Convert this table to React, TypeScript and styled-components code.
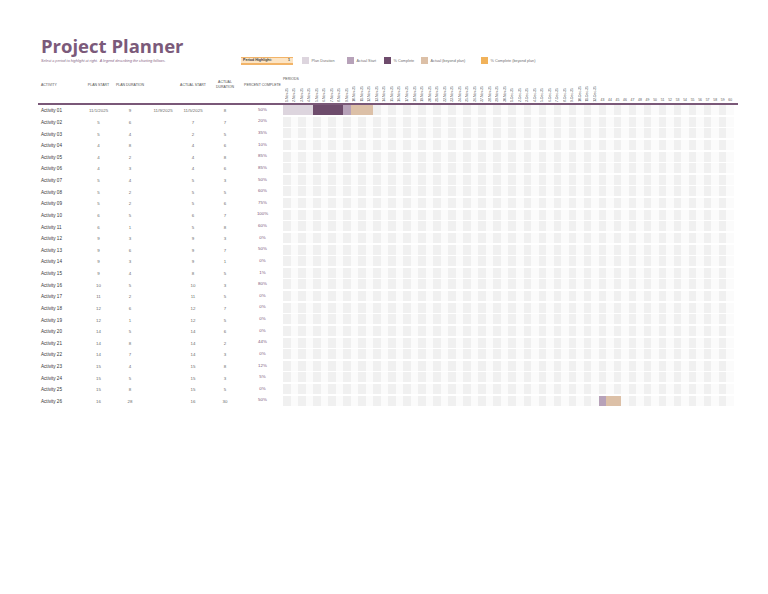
import React, { FC } from 'react';
import styled, { createGlobalStyle, css } from 'styled-components';

type CellKind = 'plan' | 'start' | 'done' | 'beyond' | 'none';

type Activity = {
  name: string,
  planStart: string,
  planDuration: string,
  extra?: string,
  actualStart: string,
  actualDuration: string,
  percent: string,
  bars?: [number, number, CellKind][],
};

const PERIODS = 60;
const DATE_COLUMNS = 42;

const activities: Activity[] = [
  { name: 'Activity 01', planStart: '11/1/2025', planDuration: '9', extra: '11/9/2025', actualStart: '11/5/2025', actualDuration: '8', percent: '50%',
    bars: [[0, 3, 'plan'], [4, 7, 'done'], [8, 8, 'start'], [9, 11, 'beyond']] },
  { name: 'Activity 02', planStart: '5', planDuration: '6', actualStart: '7', actualDuration: '7', percent: '20%' },
  { name: 'Activity 03', planStart: '5', planDuration: '4', actualStart: '2', actualDuration: '5', percent: '35%' },
  { name: 'Activity 04', planStart: '4', planDuration: '8', actualStart: '4', actualDuration: '6', percent: '10%' },
  { name: 'Activity 05', planStart: '4', planDuration: '2', actualStart: '4', actualDuration: '8', percent: '85%' },
  { name: 'Activity 06', planStart: '4', planDuration: '3', actualStart: '4', actualDuration: '6', percent: '85%' },
  { name: 'Activity 07', planStart: '5', planDuration: '4', actualStart: '5', actualDuration: '3', percent: '50%' },
  { name: 'Activity 08', planStart: '5', planDuration: '2', actualStart: '5', actualDuration: '5', percent: '60%' },
  { name: 'Activity 09', planStart: '5', planDuration: '2', actualStart: '5', actualDuration: '6', percent: '75%' },
  { name: 'Activity 10', planStart: '6', planDuration: '5', actualStart: '6', actualDuration: '7', percent: '100%' },
  { name: 'Activity 11', planStart: '6', planDuration: '1', actualStart: '5', actualDuration: '8', percent: '60%' },
  { name: 'Activity 12', planStart: '9', planDuration: '3', actualStart: '9', actualDuration: '3', percent: '0%' },
  { name: 'Activity 13', planStart: '9', planDuration: '6', actualStart: '9', actualDuration: '7', percent: '50%' },
  { name: 'Activity 14', planStart: '9', planDuration: '3', actualStart: '9', actualDuration: '1', percent: '0%' },
  { name: 'Activity 15', planStart: '9', planDuration: '4', actualStart: '8', actualDuration: '5', percent: '1%' },
  { name: 'Activity 16', planStart: '10', planDuration: '5', actualStart: '10', actualDuration: '3', percent: '80%' },
  { name: 'Activity 17', planStart: '11', planDuration: '2', actualStart: '11', actualDuration: '5', percent: '0%' },
  { name: 'Activity 18', planStart: '12', planDuration: '6', actualStart: '12', actualDuration: '7', percent: '0%' },
  { name: 'Activity 19', planStart: '12', planDuration: '1', actualStart: '12', actualDuration: '5', percent: '0%' },
  { name: 'Activity 20', planStart: '14', planDuration: '5', actualStart: '14', actualDuration: '6', percent: '0%' },
  { name: 'Activity 21', planStart: '14', planDuration: '8', actualStart: '14', actualDuration: '2', percent: '44%' },
  { name: 'Activity 22', planStart: '14', planDuration: '7', actualStart: '14', actualDuration: '3', percent: '0%' },
  { name: 'Activity 23', planStart: '15', planDuration: '4', actualStart: '15', actualDuration: '8', percent: '12%' },
  { name: 'Activity 24', planStart: '15', planDuration: '5', actualStart: '15', actualDuration: '3', percent: '5%' },
  { name: 'Activity 25', planStart: '15', planDuration: '8', actualStart: '15', actualDuration: '5', percent: '0%' },
  { name: 'Activity 26', planStart: '16', planDuration: '28', actualStart: '16', actualDuration: '30', percent: '50%',
    bars: [[42, 42, 'start'], [43, 44, 'beyond']] },
];

const legend: { label: string, color: string, width: number }[] = [
  { label: 'Plan Duration', color: '#ddd5de', width: 45 },
  { label: 'Actual Start', color: '#b7a2b9', width: 37 },
  { label: '% Complete', color: '#6e4c6c', width: 37 },
  { label: 'Actual (beyond plan)', color: '#dcc0a7', width: 60 },
  { label: '% Complete (beyond plan)', color: '#f1b25a', width: 70 },
];

const cellColors: Record<CellKind, string> = {
  plan: '#ddd5de',
  start: '#b7a2b9',
  done: '#6e4c6c',
  beyond: '#dcc0a7',
  none: 'transparent',
};

const periodLabel = (i: number) => {
  if (i >= DATE_COLUMNS) return String(i + 1);
  if (i < 30) return `${i + 1}-Nov-25`;
  return `${i - 29}-Dec-25`;
};

const kindAt = (bars: Activity['bars'], col: number): CellKind => {
  const hit = bars?.find(([from, to]) => col >= from && col <= to);
  return hit ? hit[2] : 'none';
};

export default function App() {
  return (
    <>
      <GlobalStyle />
      <Page>
        <Title>Project Planner</Title>
        <TopBar>
          <Subtitle>Select a period to highlight at right.  A legend describing the charting follows.</Subtitle>
          <HighlightBox>
            <span>Period Highlight:</span>
            <span>1</span>
          </HighlightBox>
          <Legend>
            {legend.map(item => (
              <LegendItem key={item.label} $width={item.width}>
                <Swatch $color={item.color} />
                {item.label}
              </LegendItem>
            ))}
          </Legend>
        </TopBar>

        <HeaderRow>
          <HeadCell $align="left">ACTIVITY</HeadCell>
          <HeadCell>PLAN START</HeadCell>
          <HeadCell>PLAN DURATION</HeadCell>
          <HeadCell />
          <HeadCell>ACTUAL START</HeadCell>
          <HeadCell $twoLine>ACTUAL<br />DURATION</HeadCell>
          <HeadCell>PERCENT COMPLETE</HeadCell>
          <PeriodHead>
            <PeriodTitle>PERIODS</PeriodTitle>
            <PeriodLabels>
              {Array.from({ length: PERIODS }, (_, i) => (
                <PeriodLabel key={i} $vertical={i < DATE_COLUMNS}>
                  <span>{periodLabel(i)}</span>
                </PeriodLabel>
              ))}
            </PeriodLabels>
          </PeriodHead>
        </HeaderRow>

        {activities.map(a => (
          <TaskRow key={a.name}>
            <NameCell>{a.name}</NameCell>
            <ValueCell>{a.planStart}</ValueCell>
            <ValueCell>{a.planDuration}</ValueCell>
            <ValueCell>{a.extra}</ValueCell>
            <ValueCell>{a.actualStart}</ValueCell>
            <ValueCell>{a.actualDuration}</ValueCell>
            <PercentCell>{a.percent}</PercentCell>
            {Array.from({ length: PERIODS }, (_, i) => (
              <GanttCell key={i} $kind={kindAt(a.bars, i)} $alt={i % 2 === 1} />
            ))}
          </TaskRow>
        ))}
      </Page>
    </>
  );
}

const GlobalStyle = createGlobalStyle`
  html, body {
    margin: 0;
    background: #ffffff;
  }
  body {
    font-family: "Liberation Sans", Arial, sans-serif;
    color: #404040;
  }
`;

const columns = css`
  display: grid;
  grid-template-columns: 47px 27px 36px 30px 30px 34px 41px repeat(${PERIODS}, 7.53px);
`;

const Page = styled.div`
  padding: 35px 0 0 38px;
  width: 700px;
`;

const Title = styled.h1`
  margin: 0 0 0 3px;
  font-family: "Open Sans", "Liberation Sans", sans-serif;
  font-weight: 700;
  font-size: 18.5px;
  line-height: 21px;
  color: #7b5a7a;
`;

const TopBar = styled.div`
  display: flex;
  align-items: center;
  height: 9px;
  margin: 0 0 8px 3px;
`;

const Subtitle = styled.div`
  width: 200px;
  font-size: 3.7px;
  font-style: italic;
  color: #8a6a88;
  white-space: pre;
`;

const HighlightBox = styled.div`
  display: flex;
  justify-content: space-between;
  align-items: center;
  box-sizing: border-box;
  width: 52px;
  height: 8px;
  padding: 0 3px 0 2px;
  background: #fce4c4;
  border: 1px solid #f2b468;
  border-width: 1px 0 2px;
  font-size: 3.6px;
  font-weight: 700;
  color: #3a3a3a;
`;

const Legend = styled.div`
  display: flex;
  margin-left: 9px;
`;

const LegendItem = styled.div<{ $width: number }>`
  display: flex;
  align-items: center;
  gap: 2.5px;
  width: ${p => p.$width}px;
  font-size: 3.8px;
  color: #707070;
  white-space: nowrap;
`;

const Swatch = styled.span<{ $color: string }>`
  width: 7px;
  height: 7px;
  background: ${p => p.$color};
`;

const HeaderRow = styled.div`
  ${columns};
  height: 30px;
  border-bottom: 2px solid #7a5878;
`;

const HeadCell = styled.div<{ $align?: 'left' | 'center', $twoLine?: boolean }>`
  padding: ${p => (p.$twoLine ? '7px' : '10px')} 0 0 ${p => (p.$align === 'left' ? '3px' : '0')};
  text-align: ${p => p.$align || 'center'};
  font-size: 3.5px;
  line-height: 4.6px;
  color: #505050;
  white-space: nowrap;
`;

const PeriodHead = styled.div`
  grid-column: 8 / -1;
  display: flex;
  flex-direction: column;
`;

const PeriodTitle = styled.div`
  padding-top: 4px;
  font-size: 3.5px;
  color: #505050;
`;

const PeriodLabels = styled.div`
  flex: 1;
  display: grid;
  grid-template-columns: repeat(${PERIODS}, 7.53px);
  padding-bottom: 1px;
`;

const PeriodLabel = styled.div<{ $vertical: boolean }>`
  display: flex;
  align-items: flex-end;
  justify-content: center;
  font-size: 3.4px;
  color: #555555;
  span {
    ${p => p.$vertical && css`
      writing-mode: vertical-rl;
      transform: rotate(180deg);
    `}
    white-space: nowrap;
  }
`;

const TaskRow = styled.div`
  ${columns};
  height: 11.64px;
  align-items: center;
`;

const NameCell = styled.div`
  padding-left: 3px;
  font-size: 4.6px;
  color: #333333;
  white-space: nowrap;
`;

const ValueCell = styled.div`
  text-align: center;
  font-size: 4.4px;
  color: #6a6a6a;
  white-space: nowrap;
`;

const PercentCell = styled.div`
  text-align: center;
  padding-bottom: 3px;
  font-size: 4.4px;
  color: #7a5878;
`;

const GanttCell = styled.div<{ $kind: CellKind, $alt: boolean }>`
  align-self: start;
  height: 10px;
  background: ${p => (p.$kind === 'none' ? (p.$alt ? '#fbfbfb' : '#f0f0f0') : cellColors[p.$kind])};
`;
